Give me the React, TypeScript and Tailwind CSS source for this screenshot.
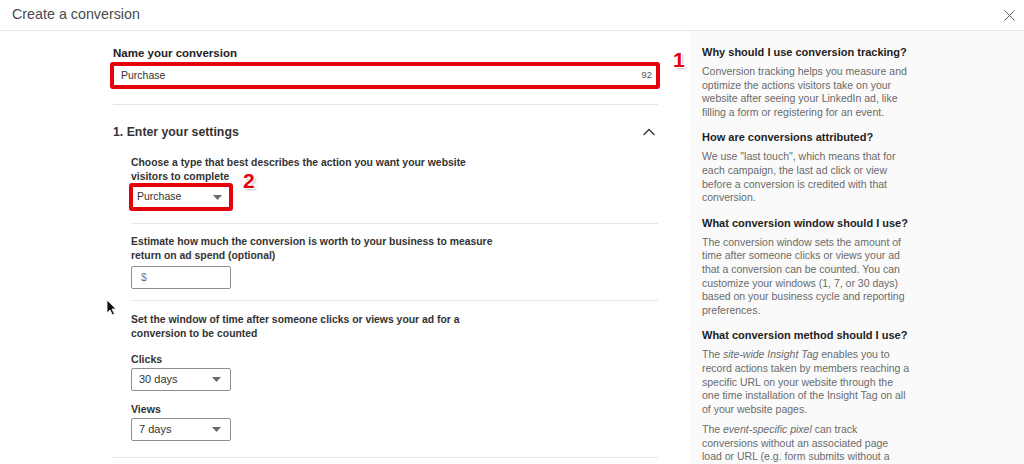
import { X, ChevronUp } from "lucide-react";

const font = { fontFamily: '"Liberation Sans", Arial, sans-serif' };

function Caret() {
  return (
    <svg width="9" height="5" viewBox="0 0 9 5" className="shrink-0">
      <path d="M0 0h9L4.5 5z" fill="#6b6b6b" />
    </svg>
  );
}

function Select({ value, className = "" }: { value: string; className?: string }) {
  return (
    <div
      className={`flex h-[23px] w-[100px] items-center justify-between rounded-[2px] border border-[#8f8f8f] bg-white pl-[7px] pr-[9px] text-[11px] text-[#333] ${className}`}
    >
      <span>{value}</span>
      <Caret />
    </div>
  );
}

function Marker({ n, className }: { n: string; className: string }) {
  return (
    <span
      className={`absolute text-[21px] font-bold leading-none text-[#e3000f] ${className}`}
      style={{ textShadow: "1px 1px 0 #fff, -1px -1px 0 #fff, 1px -1px 0 #fff, -1px 1px 0 #fff, 2px 2px 2px rgba(0,0,0,0.25)" }}
    >
      {n}
    </span>
  );
}

function Help({ title, children }: { title: string; children: React.ReactNode }) {
  return (
    <div className="mb-[11px]">
      <h3 className="text-[11px] font-bold leading-[14px] text-[#222]">{title}</h3>
      <div className="mt-[6px] space-y-[7px] text-[10.5px] leading-[13.6px] text-[#6a6a6a]">{children}</div>
    </div>
  );
}

export default function App() {
  return (
    <div className="relative h-[464px] w-[1024px] overflow-hidden bg-white" style={font}>
      <header className="flex h-[31px] items-center justify-between border-b border-[#e8e8e8] pl-[12px] pr-[5px]">
        <h1 className="text-[14.3px] text-[#4a4a4a]">Create a conversion</h1>
        <X size={19} strokeWidth={1.2} className="text-[#555]" />
      </header>

      <div className="flex">
        <main className="w-[660px] pl-[113px]">
          <div className="relative pt-[15px]">
            <label className="block text-[11.5px] font-bold leading-[14px] text-[#222]">Name your conversion</label>
            <div className="-ml-[3px] mt-[2px] w-[550px] rounded-[3px] border-[4px] border-[#e6000c] bg-white">
              <div className="flex h-[19px] items-center justify-between pl-[7px] pr-[4px] text-[10.5px]">
                <span className="text-[#333]">Purchase</span>
                <span className="text-[9.5px] text-[#555]">92</span>
              </div>
            </div>
            <Marker n="1" className="left-[560px] top-[18px]" />
          </div>

          <div className="mr-[2px] mt-[15px] border-b border-[#e6e6e6]" />

          <div className="mr-[2px] mt-[17px] flex items-center justify-between">
            <h2 className="text-[12.3px] font-bold text-[#333]">1. Enter your settings</h2>
            <ChevronUp size={20} strokeWidth={1.6} className="-mr-[1px] text-[#333]" />
          </div>

          <div className="pl-[18px]">
            <div className="relative mt-[14px]">
              <p className="w-[350px] text-[10.4px] font-bold leading-[14px] text-[#333]">
                Choose a type that best describes the action you want your website visitors to complete
              </p>
              <div className="-ml-[2px] -mt-[1px] w-[104px] rounded-[3px] border-[4px] border-[#e6000c] bg-white">
                <div className="flex h-[20px] items-center justify-between pl-[4px] pr-[7px] text-[10.5px] text-[#333]">
                  <span>Purchase</span>
                  <Caret />
                </div>
              </div>
              <Marker n="2" className="left-[112px] top-[14px]" />
            </div>

            <div className="mr-[2px] mt-[12px] border-b border-[#e6e6e6]" />

            <p className="mt-[11px] w-[380px] text-[10.4px] font-bold leading-[14px] text-[#333]">
              Estimate how much the conversion is worth to your business to measure return on ad spend (optional)
            </p>
            <div className="mt-[3px] flex h-[23px] w-[100px] items-center rounded-[2px] border border-[#8f8f8f] pl-[9px] text-[10.5px] text-[#777]">
              $
            </div>

            <div className="mr-[2px] mt-[11px] border-b border-[#e6e6e6]" />

            <p className="mt-[12px] w-[370px] text-[10.4px] font-bold leading-[14px] text-[#333]">
              Set the window of time after someone clicks or views your ad for a conversion to be counted
            </p>
            <p className="mt-[11px] text-[10.6px] font-bold leading-[14px] text-[#333]">Clicks</p>
            <Select value="30 days" className="mt-[2px]" />
            <p className="mt-[11px] text-[10.6px] font-bold leading-[14px] text-[#333]">Views</p>
            <Select value="7 days" className="mt-[2px]" />
          </div>

          <div className="mr-[2px] mt-[16px] border-b border-[#e6e6e6]" />
        </main>

        <aside className="ml-[30px] h-[433px] flex-1 bg-[#fafafa] pl-[12px] pr-[20px] pt-[14px]">
          <Help title="Why should I use conversion tracking?">
            <p className="w-[230px]">
              Conversion tracking helps you measure and
              <br />
              optimize the actions visitors take on your
              <br />
              website after seeing your LinkedIn ad, like
              <br />
              filling a form or registering for an event.
            </p>
          </Help>
          <Help title="How are conversions attributed?">
            <p className="w-[230px]">
              We use "last touch", which means that for
              <br />
              each campaign, the last ad click or view
              <br />
              before a conversion is credited with that
              <br />
              conversion.
            </p>
          </Help>
          <Help title="What conversion window should I use?">
            <p className="w-[230px]">
              The conversion window sets the amount of
              <br />
              time after someone clicks or views your ad
              <br />
              that a conversion can be counted. You can
              <br />
              customize your windows (1, 7, or 30 days)
              <br />
              based on your business cycle and reporting
              <br />
              preferences.
            </p>
          </Help>
          <Help title="What conversion method should I use?">
            <p className="w-[230px]">
              The <i>site-wide Insight Tag</i> enables you to
              <br />
              record actions taken by members reaching a
              <br />
              specific URL on your website through the
              <br />
              one time installation of the Insight Tag on all
              <br />
              of your website pages.
            </p>
            <p className="w-[230px]">
              The <i>event-specific pixel</i> can track
              <br />
              conversions without an associated page
              <br />
              load or URL (e.g. form submits without a
              <br />
              thank-you page).
            </p>
          </Help>
        </aside>
      </div>

      <svg width="12" height="17" viewBox="0 0 12 17" className="absolute left-[106px] top-[299px]">
        <path d="M1 1v13l3-3 2.5 5 2-1-2.5-5H10z" fill="#111" stroke="#fff" strokeWidth="0.8" />
      </svg>
    </div>
  );
}
